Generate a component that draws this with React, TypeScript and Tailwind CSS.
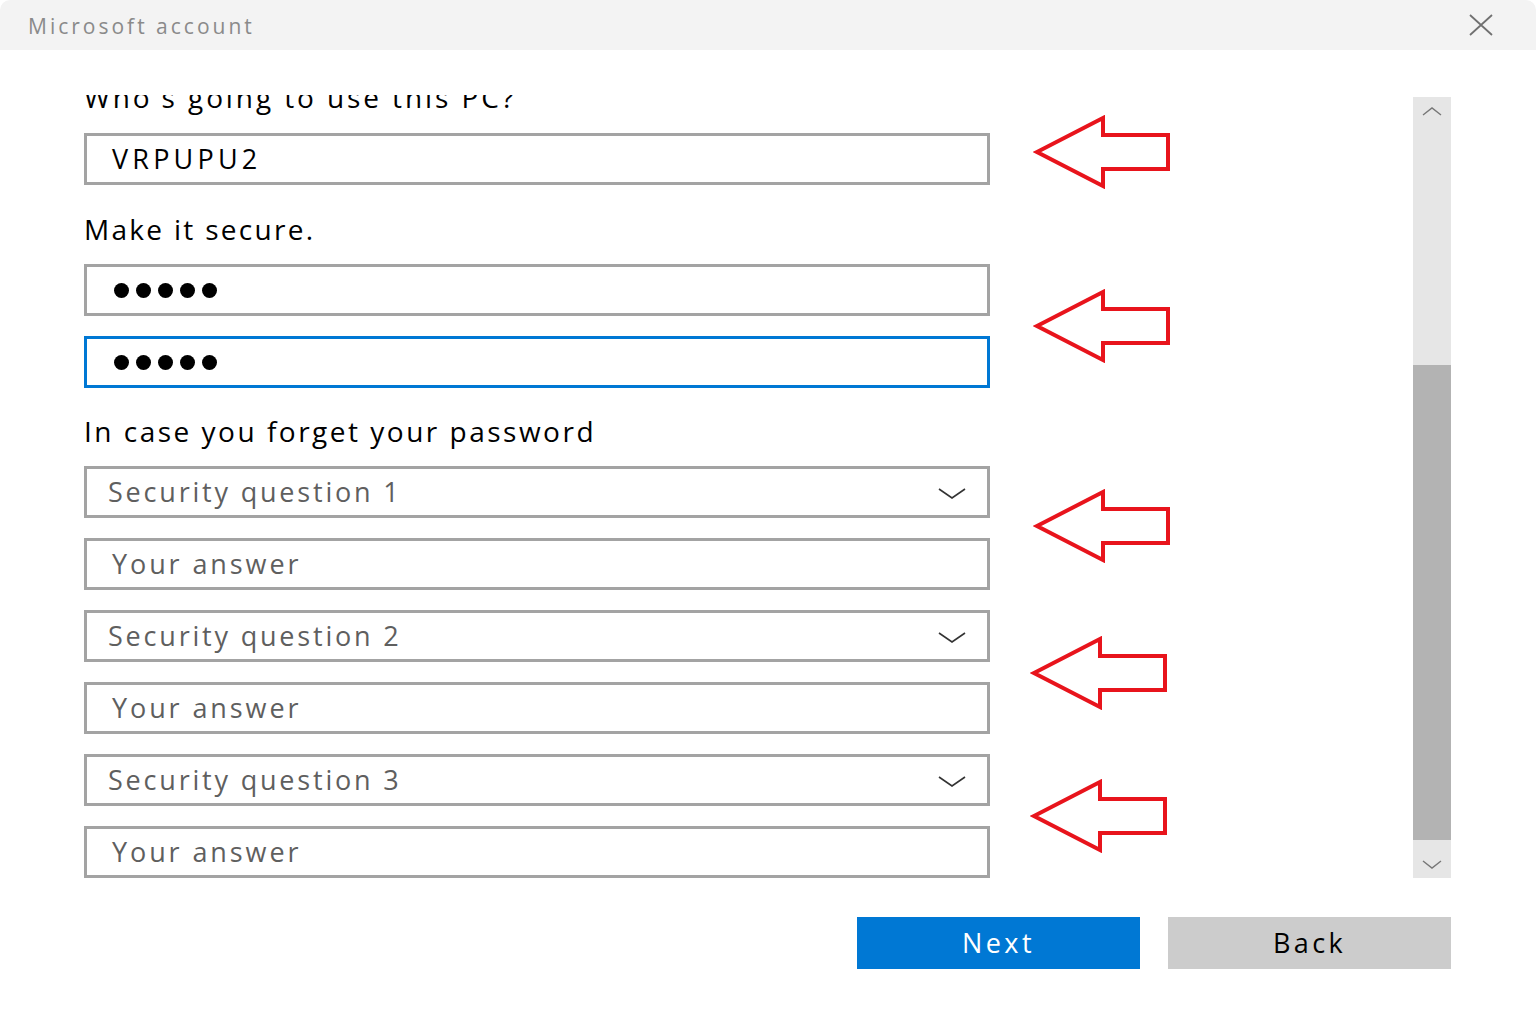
import React from "react";

const font = { fontFamily: '"Open Sans", "Noto Sans", sans-serif' };

function Field({ children, focused }: { children?: React.ReactNode; focused?: boolean }) {
  return (
    <div
      className={`h-[52px] bg-white flex items-center border-[3px] ${
        focused ? "border-[#0078d4]" : "border-[#a3a3a3]"
      }`}
    >
      {children}
    </div>
  );
}

function Dots() {
  return (
    <div className="flex gap-[7px] pl-[27px]">
      {[0, 1, 2, 3, 4].map((i) => (
        <span key={i} className="block w-[15px] h-[15px] rounded-full bg-black" />
      ))}
    </div>
  );
}

function Select({ label }: { label: string }) {
  return (
    <Field>
      <span className="pl-[21px] text-[27px] text-[#5f5f5f] tracking-[2.8px] flex-1">{label}</span>
      <svg width="28" height="14" viewBox="0 0 28 14" className="mr-[21px] mt-[4px]">
        <path d="M1 2 L14 11 L27 2" fill="none" stroke="#333" strokeWidth="1.6" />
      </svg>
    </Field>
  );
}

function Answer() {
  return (
    <Field>
      <span className="pl-[25px] text-[27px] text-[#5f5f5f] tracking-[2.9px]">Your answer</span>
    </Field>
  );
}

function RedArrow({ x, y }: { x: number; y: number }) {
  return (
    <svg
      width="140"
      height="74"
      viewBox="0 0 140 74"
      className="absolute"
      style={{ left: x, top: y }}
    >
      <path
        d="M4 37 L70 3 L70 20 L135 20 L135 54 L70 54 L70 71 Z"
        fill="none"
        stroke="#e8141c"
        strokeWidth="4"
        strokeLinejoin="miter"
      />
    </svg>
  );
}

export default function App() {
  return (
    <div className="relative w-[1536px] h-[1024px] bg-white overflow-hidden flex flex-col" style={font}>
      {/* title bar */}
      <div className="h-[50px] bg-[#f3f3f3] flex items-center justify-between rounded-t-[10px]">
        <span className="pl-[28px] pt-[3px] text-[21px] text-[#8a8a8a] tracking-[3px]">Microsoft account</span>
        <svg width="26" height="22" viewBox="0 0 26 22" className="mr-[42px]">
          <path d="M2 1 L24 21 M24 1 L2 21" stroke="#707070" strokeWidth="1.8" />
        </svg>
      </div>

      {/* body: content scrolled so the first heading is partly hidden */}
      <div className="flex">
        <div className="ml-[84px] w-[906px] mt-[45px] h-[783px] overflow-hidden flex flex-col text-black">
          <div className="h-[38px] relative">
            <span className="absolute left-[0px] top-[-18px] text-[28px] tracking-[2.9px] leading-[40px] whitespace-nowrap">
              Who's going to use this PC?
            </span>
          </div>
          <Field>
            <span className="pl-[25px] text-[27px] tracking-[4.2px]">VRPUPU2</span>
          </Field>
          <div className="h-[79px] flex items-center text-[28px] tracking-[2.3px] pt-[9px]">Make it secure.</div>
          <div className="flex flex-col gap-[20px]">
            <Field>
              <Dots />
            </Field>
            <Field focused>
              <Dots />
            </Field>
          </div>
          <div className="h-[78px] flex items-center text-[28px] tracking-[2.5px] pt-[8px]">
            In case you forget your password
          </div>
          <div className="flex flex-col gap-[20px]">
            <Select label="Security question 1" />
            <Answer />
            <Select label="Security question 2" />
            <Answer />
            <Select label="Security question 3" />
            <Answer />
          </div>
        </div>

        <div className="flex-1" />

        {/* scrollbar */}
        <div className="mt-[47px] mr-[85px] w-[38px] h-[781px] flex flex-col bg-[#e6e6e6]">
          <div className="h-[28px] flex items-center justify-center">
            <svg width="20" height="10" viewBox="0 0 20 10">
              <path d="M1 9 L10 2 L19 9" fill="none" stroke="#777" strokeWidth="1.4" />
            </svg>
          </div>
          <div className="h-[240px]" />
          <div className="h-[475px] bg-[#b3b3b3]" />
          <div className="flex-1 flex items-center justify-center pt-[12px]">
            <svg width="20" height="10" viewBox="0 0 20 10">
              <path d="M1 1 L10 8 L19 1" fill="none" stroke="#777" strokeWidth="1.4" />
            </svg>
          </div>
        </div>
      </div>

      {/* buttons */}
      <div className="flex justify-end gap-[28px] mr-[85px] mt-[39px]">
        <button className="w-[283px] h-[52px] bg-[#0078d4] text-white text-[27px] tracking-[3.4px]">Next</button>
        <button className="w-[283px] h-[52px] bg-[#cccccc] text-black text-[27px] tracking-[3.4px]">Back</button>
      </div>

      {/* annotation arrows */}
      <RedArrow x={1033} y={115} />
      <RedArrow x={1033} y={289} />
      <RedArrow x={1033} y={489} />
      <RedArrow x={1030} y={636} />
      <RedArrow x={1030} y={779} />
    </div>
  );
}
